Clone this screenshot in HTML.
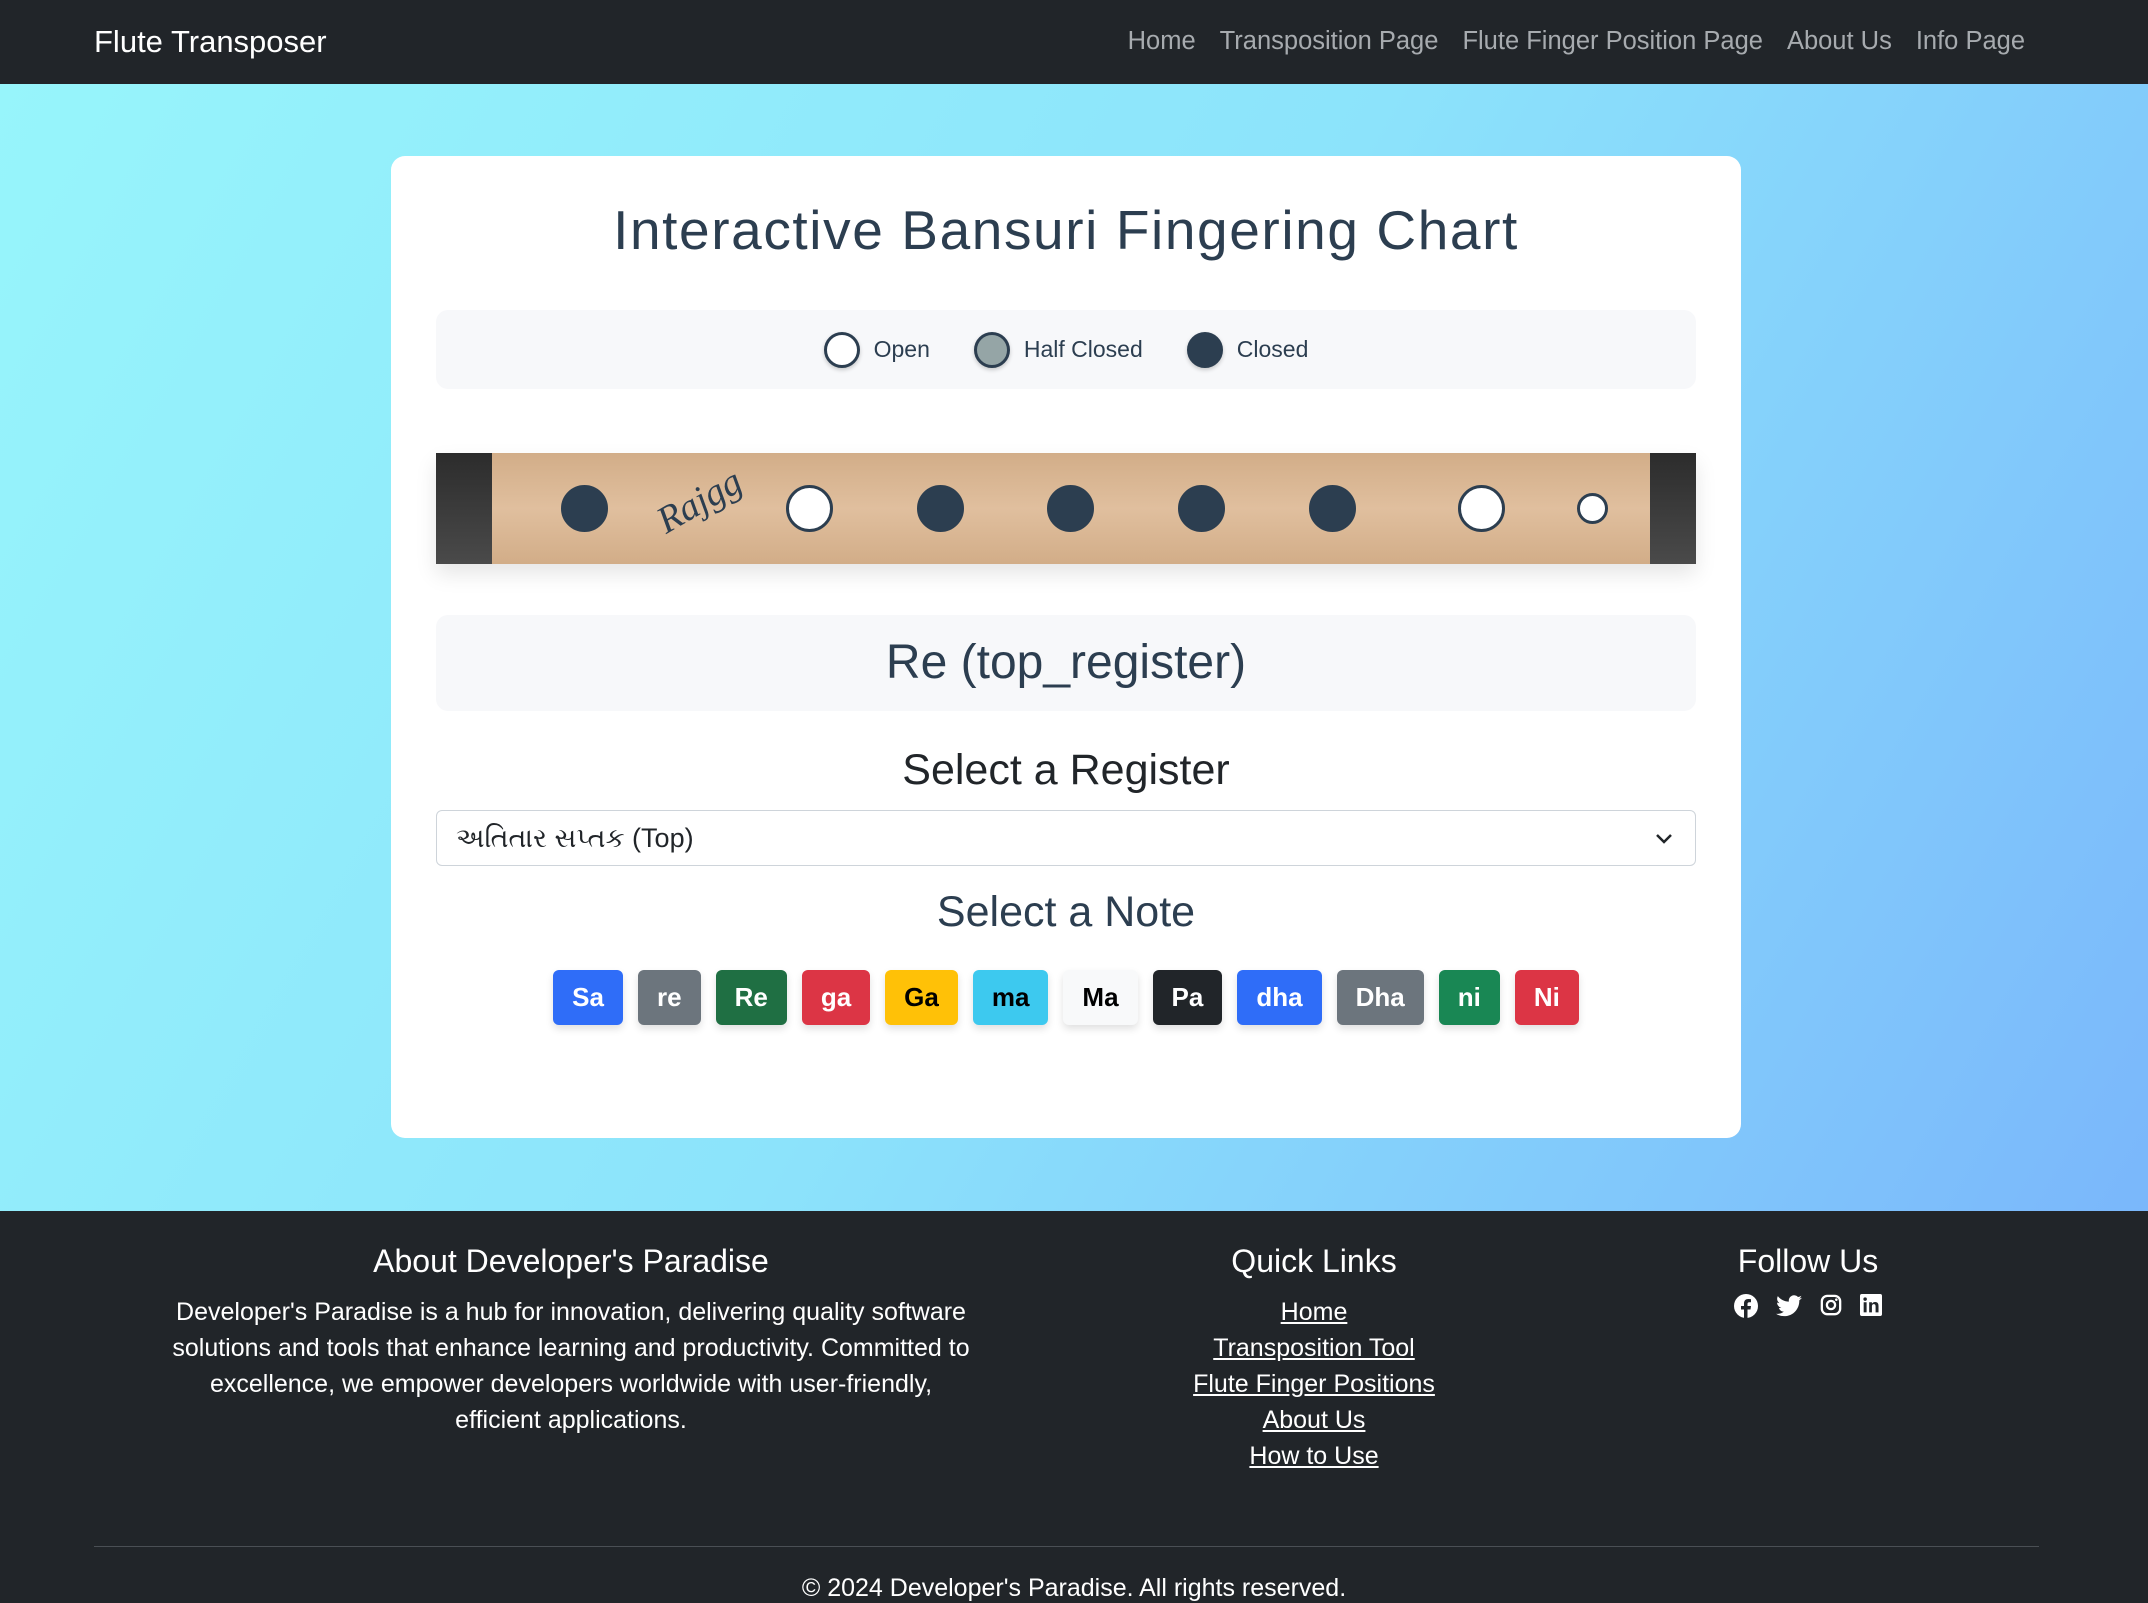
<!DOCTYPE html>
<html><head><meta charset="utf-8"><style>
*{box-sizing:border-box;margin:0;padding:0}
body{width:2148px;height:1599px;overflow:hidden;font-family:"Liberation Sans","Noto Sans CJK SC",sans-serif;position:relative;background:#212529}
.nav{position:absolute;left:0;top:0;width:2148px;height:84px;background:#212529}
.brand{position:absolute;left:94px;top:24px;color:#fff;font-size:31px}
.links{position:absolute;right:123px;top:27px;color:#a7abaf;font-size:25.5px;white-space:nowrap}
.links span{margin-left:24px}
.main{position:absolute;left:0;top:84px;width:2148px;height:1127px;background:linear-gradient(120deg,#97f5fb 0%,#8ce3fb 50%,#7ab7fb 100%)}
.card{position:absolute;left:391px;top:72px;width:1350px;height:982px;background:#fff;border-radius:14px}
.c{position:absolute;left:0;width:100%;text-align:center;color:#2c3e50}
.box{position:absolute;left:45px;width:1260px;background:#f7f8fa;border-radius:12px}
.leg{display:flex;justify-content:center;align-items:center;height:79px;font-size:23px;color:#2c3e50}
.dot{width:36px;height:36px;border-radius:50%;border:3px solid #2c3e50;display:inline-block;margin-right:14px;box-shadow:0 2px 4px rgba(0,0,0,.2)}
.flute{position:absolute;left:45px;top:297px;width:1260px;height:111px;background:linear-gradient(#d2ad88,#e0bf9e 50%,#d2ad88);box-shadow:0 10px 20px rgba(0,0,0,.1)}
.cap{position:absolute;top:0;width:56px;height:111px;background:linear-gradient(#2c2c2c,#4a4a4a)}
.h{position:absolute;width:47px;height:47px;border-radius:50%;border:3px solid #2c3e50;top:32px;background:#2c3e50}
.o{background:#fff}
.sel{position:absolute;left:45px;top:654px;width:1260px;height:56px;border:1px solid #ced4da;border-radius:6px;font-size:27px;color:#212529;padding:12px 19px}
.btns{position:absolute;left:0;top:814px;width:100%;display:flex;justify-content:center;gap:15px}
.b{height:55px;line-height:55px;padding:0 19px;border-radius:6px;color:#fff;font-weight:bold;font-size:26px;box-shadow:0 4px 8px rgba(0,0,0,.12)}
.f{position:absolute;color:#fff;text-align:center}
.f h3{font-weight:normal;font-size:32px;margin-bottom:14px}
.f p{font-size:25px;line-height:36px}
.f a{display:block;color:#fff;text-decoration:underline;font-size:25px;line-height:36px}
</style></head><body>
<div class="nav"><div class="brand">Flute Transposer</div>
<div class="links"><span>Home</span><span>Transposition Page</span><span>Flute Finger Position Page</span><span>About Us</span><span>Info Page</span></div></div>
<div class="main">
<div class="card">
<div class="c" style="top:42px;font-size:55px;letter-spacing:1.6px">Interactive Bansuri Fingering Chart</div>
<div class="box" style="top:154px;height:79px"><div class="leg">
<span class="dot" style="background:#fff"></span><span style="margin-right:44px">Open</span>
<span class="dot" style="background:#95a5a6"></span><span style="margin-right:44px">Half Closed</span>
<span class="dot" style="background:#2c3e50"></span><span>Closed</span></div></div>
<div class="flute">
<div class="cap" style="left:0"></div><div class="cap" style="right:0;width:46px"></div>
<div class="h" style="left:125px"></div>
<div style="position:absolute;left:218px;top:26px;font-family:'Liberation Serif',serif;font-style:italic;font-size:38px;color:#2c3e50;transform:rotate(-30deg)">Rajgg</div>
<div class="h o" style="left:350px"></div>
<div class="h" style="left:481px"></div>
<div class="h" style="left:611px"></div>
<div class="h" style="left:742px"></div>
<div class="h" style="left:873px"></div>
<div class="h o" style="left:1022px"></div>
<div class="h o" style="left:1141px;width:31px;height:31px;top:40px"></div>
</div>
<div class="box" style="top:459px;height:96px;text-align:center;font-size:48px;line-height:96px;color:#2c3e50">Re (top_register)</div>
<div class="c" style="top:590px;font-size:43px;color:#212529">Select a Register</div>
<div class="sel">અતિતાર સપ્તક (Top)<svg style="position:absolute;right:22px;top:20px" width="18" height="14" viewBox="0 0 18 14"><path d="M2 4l7 7 7-7" fill="none" stroke="#212529" stroke-width="2.5"/></svg></div>
<div class="c" style="top:732px;font-size:43px">Select a Note</div>
<div class="btns">
<span class="b" style="background:#2f6df8">Sa</span><span class="b" style="background:#6c757d">re</span><span class="b" style="background:#1f6f43">Re</span><span class="b" style="background:#dc3545">ga</span><span class="b" style="background:#ffc107;color:#000">Ga</span><span class="b" style="background:#3dc9ef;color:#000">ma</span><span class="b" style="background:#f8f9fa;color:#000">Ma</span><span class="b" style="background:#212529">Pa</span><span class="b" style="background:#2f6df8">dha</span><span class="b" style="background:#6c757d">Dha</span><span class="b" style="background:#198754">ni</span><span class="b" style="background:#dc3545">Ni</span>
</div>
</div></div>
<div class="f" style="left:166px;width:810px;top:1243px"><h3>About Developer's Paradise</h3><p>Developer's Paradise is a hub for innovation, delivering quality software solutions and tools that enhance learning and productivity. Committed to excellence, we empower developers worldwide with user-friendly, efficient applications.</p></div>
<div class="f" style="left:1114px;width:400px;top:1243px"><h3>Quick Links</h3><a>Home</a><a>Transposition Tool</a><a>Flute Finger Positions</a><a>About Us</a><a>How to Use</a></div>
<div class="f" style="left:1608px;width:400px;top:1243px"><h3>Follow Us</h3>
<div style="display:flex;justify-content:center;gap:18px;margin-top:12px">
<svg width="24" height="24" viewBox="0 0 24 24"><circle cx="12" cy="12" r="12" fill="#fff"/><path d="M13.5 24v-8.5h3l.5-3.5h-3.5V10c0-1 .4-1.7 1.8-1.7H17V5.2c-.4 0-1.5-.2-2.7-.2-2.6 0-4.3 1.6-4.3 4.4V12H7v3.5h3V24z" fill="#212529"/></svg>
<svg width="26" height="24" viewBox="0 0 24 20"><path d="M24 2.4c-.9.4-1.8.6-2.8.8 1-.6 1.8-1.6 2.2-2.7-1 .6-2 1-3.1 1.2A4.9 4.9 0 0 0 11.9 6C7.7 5.8 4.1 3.9 1.700.9c-1.3 2.3-.6 5.1 1.5 6.5-.8 0-1.6-.2-2.2-.6 0 2.4 1.7 4.4 3.9 4.9-.7.2-1.5.2-2.2.1.6 2 2.4 3.4 4.6 3.4A9.9 9.9 0 0 1 0 17.2 14 14 0 0 0 7.5 19.4c9.1 0 14.3-7.7 14-14.6 1-.7 1.8-1.5 2.5-2.4z" fill="#fff"/></svg>
<svg width="22" height="22" viewBox="0 0 24 24"><rect x="2" y="2" width="20" height="20" rx="6" fill="none" stroke="#fff" stroke-width="2.5"/><circle cx="12" cy="12" r="4.5" fill="none" stroke="#fff" stroke-width="2.5"/><circle cx="17.8" cy="6.2" r="1.4" fill="#fff"/></svg>
<svg width="22" height="22" viewBox="0 0 24 24"><rect x="0" y="0" width="24" height="24" rx="2" fill="#fff"/><rect x="4" y="9" width="3.2" height="11" fill="#212529"/><circle cx="5.6" cy="5.6" r="1.9" fill="#212529"/><path d="M10 9h3v1.6c.6-1 1.8-1.9 3.6-1.9 3 0 3.6 2 3.6 4.6V20h-3.2v-5.9c0-1.4-.1-3-1.9-3s-2.1 1.4-2.1 2.9v6H10z" fill="#212529"/></svg>
</div></div>
<div style="position:absolute;left:94px;top:1546px;width:1945px;height:1px;background:#4a4f54"></div>
<div class="f" style="left:0;width:2148px;top:1574px;font-size:25px">© 2024 Developer's Paradise. All rights reserved.</div>
</body></html>
